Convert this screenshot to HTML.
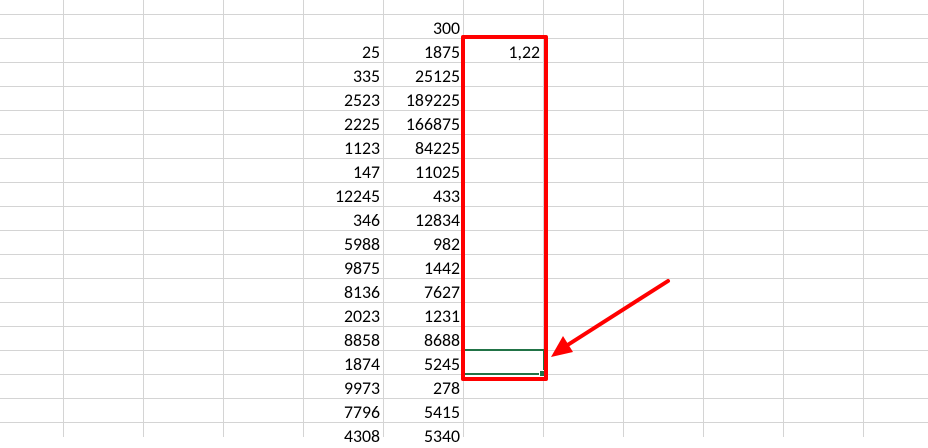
<!DOCTYPE html><html><head><style>
body{margin:0;width:928px;height:437px;overflow:hidden;background:#fff;position:relative;font-family:Calibri,"Carlito","Liberation Sans",sans-serif;}
.g{position:absolute;left:0;top:0;width:928px;height:437px;
background-image:linear-gradient(to right,#d4d4d4 1px,transparent 1px),linear-gradient(to bottom,#d4d4d4 1px,transparent 1px);
background-size:80px 24px;background-position:63px 0,0 14px;}
.t{position:absolute;width:77px;text-align:right;font-size:17.8px;height:24px;line-height:24px;color:#000;}
</style></head><body>
<div class="g"></div>
<div id="c"></div>
<div style="position:absolute;left:463px;top:349px;width:78px;height:22px;border:2px solid #217346;"></div>
<div style="position:absolute;left:539px;top:370px;width:5px;height:5px;background:#217346;border:1px solid #fff"></div>
<div style="position:absolute;left:461px;top:35px;width:79px;height:338px;border:4px solid #f00;border-radius:2px"></div>
<svg style="position:absolute;left:0;top:0" width="928" height="437"><line x1="668" y1="281" x2="566" y2="346" stroke="#f00" stroke-width="4" stroke-linecap="round"/><polygon points="551,357 563,336 573,352" fill="#f00"/></svg>
<script>
var a=[["","300"],["25","1875"],["335","25125"],["2523","189225"],["2225","166875"],["1123","84225"],["147","11025"],["12245","433"],["346","12834"],["5988","982"],["9875","1442"],["8136","7627"],["2023","1231"],["8858","8688"],["1874","5245"],["9973","278"],["7796","5415"],["4308","5340"]];
var h="";a.forEach(function(r,i){var y=16+24*i;h+='<div class="t" style="left:303px;top:'+y+'px">'+r[0]+'</div><div class="t" style="left:383px;top:'+y+'px">'+r[1]+'</div>';});
h+='<div class="t" style="left:463px;top:40px">1,22</div>';
document.getElementById("c").innerHTML=h;
</script>
</body></html>
